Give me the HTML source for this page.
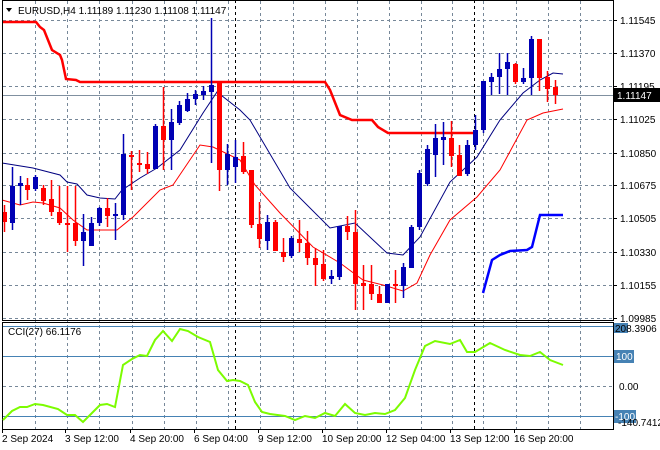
<!DOCTYPE html>
<html><head><meta charset="utf-8"><style>
body{margin:0;background:#fff;width:660px;height:450px;overflow:hidden;font-family:"Liberation Sans",sans-serif}
svg{display:block}
text{font-family:"Liberation Sans",sans-serif;font-size:10px;fill:#000}
</style></head><body>
<svg id="s" width="660" height="450" xmlns="http://www.w3.org/2000/svg">
<g id="grid" stroke="#778899" stroke-width="1" stroke-dasharray="3,3" fill="none"></g>
<line x1="2" y1="95.5" x2="613" y2="95.5" stroke="#8090a0"/>
<line x1="235.5" y1="0" x2="235.5" y2="429" stroke="#000" stroke-dasharray="3,3"/>
<line x1="474.5" y1="0" x2="474.5" y2="429" stroke="#000" stroke-dasharray="3,3"/>
<polyline fill="none" stroke="#ff0000" stroke-width="2.5" points="2,22 36,22 40,27 44,30 52,50 60,55 62,60 66,79 76,80 80,82 325,82 330,90 340,115 352,120 372,120 378,127 388,133 475,133"/>
<polyline fill="none" stroke="#0000ff" stroke-width="2.5" points="483,293 492,260 500,255 510,251 527,250 532,247 540,215 563,215"/>
<polyline fill="none" stroke="#000080" stroke-width="1" points="2,163 33,168 60,175 67,182 77,184 87,195 100,198 115,199 122,190 140,178 157,168 180,150 203,113 217,92 240,110 250,120 290,188 330,228 355,223 387,253 403,255 420,237 450,182 477,157 500,120 523,93 540,80 553,73 563,74"/>
<polyline fill="none" stroke="#ff0000" stroke-width="1" points="2,200 20,205 33,202 43,203 60,208 73,220 87,230 117,230 133,217 160,190 173,185 200,145 213,147 240,160 255,185 280,213 313,247 340,263 363,280 383,285 403,291 417,283 430,255 450,220 477,197 500,170 527,120 543,113 563,109"/>
<g id="candles"></g>
<rect x="2.5" y="0.5" width="611" height="320" fill="none" stroke="#000"/>
<rect x="2.5" y="322.5" width="611" height="107" fill="none" stroke="#000"/>
<line x1="3" y1="326.5" x2="613" y2="326.5" stroke="#4682b4"/>
<line x1="3" y1="356.5" x2="613" y2="356.5" stroke="#4682b4"/>
<line x1="3" y1="386.5" x2="613" y2="386.5" stroke="#778899" stroke-dasharray="3,3"/>
<line x1="3" y1="416.5" x2="613" y2="416.5" stroke="#4682b4"/>
<polyline fill="none" stroke="#7cfc00" stroke-width="2" points="3,420 12,411 20,407 27,407 35,404 43,405 58,409 67,415 75,415 83,422 100,405 107,404 115,407 123,365 132,359 140,355 147,356 155,340 163,331 172,341 180,329 188,331 198,337 210,342 218,370 227,381 233,380 240,381 248,385 255,402 262,412 270,414 285,416 295,420 305,416 315,418 325,413 335,416 345,404 355,413 365,415 375,413 385,414 395,410 405,398 415,370 425,346 435,341 450,344 460,340 467,352 475,352 490,343 505,350 520,355 530,356 540,352 550,360 563,365"/>
<text x="8" y="335">CCI(27) 66.1176</text>
<path d="M6,8 L12,8 L9,12 Z" fill="#000"/>
<text x="18" y="14">EURUSD,H4  1.11189 1.11230 1.11108 1.11147</text>
<g id="ax"></g>
<rect x="614" y="88" width="46" height="14" fill="#000"/>
<text x="617" y="99" style="fill:#fff">1.11147</text>
<rect x="614" y="323" width="14" height="10" fill="#4682b4"/>
<text x="615" y="332">208.3906</text>
<rect x="614" y="350" width="20" height="13" fill="#4682b4"/>
<text x="616" y="360" style="fill:#fff">100</text>
<text x="619" y="390">0.00</text>
<rect x="614" y="410" width="22" height="13" fill="#4682b4"/>
<text x="615" y="420" style="fill:#fff">-100</text>
<text x="618" y="426">-140.7412</text>
<g id="tl"></g>
</svg>
<script>
var NS="http://www.w3.org/2000/svg";
function el(p,t,a,txt){var e=document.createElementNS(NS,t);for(var k in a)e.setAttribute(k,a[k]);if(txt)e.textContent=txt;document.getElementById(p).appendChild(e);}
var g=[35,67,99,132,164,196,228,260,293,325,357,389,421,452,483,516,548,580];
g.forEach(function(x){el("grid","line",{x1:x+.5,y1:1,x2:x+.5,y2:429});});
var h=[20,53,86,119,153,185,218,252,285,318];
h.forEach(function(y){el("grid","line",{x1:3,y1:y+.5,x2:613,y2:y+.5});});
var lab=["1.11545","1.11370","1.11195","1.11025","1.10850","1.10675","1.10505","1.10330","1.10155","1.09985"];
h.forEach(function(y,i){el("ax","line",{x1:613,y1:y+.5,x2:617,y2:y+.5,stroke:"#000"});el("ax","text",{x:620,y:y+4},lab[i]);});
var tl=[[2,"2 Sep 2024"],[65,"3 Sep 12:00"],[130,"4 Sep 20:00"],[194,"6 Sep 04:00"],[258,"9 Sep 12:00"],[322,"10 Sep 20:00"],[386,"12 Sep 04:00"],[450,"13 Sep 12:00"],[514,"16 Sep 20:00"]];
tl.forEach(function(t){el("tl","text",{x:t[0],y:442},t[1]);el("tl","line",{x1:t[0]+.5,y1:429,x2:t[0]+.5,y2:433,stroke:"#000"});});
var c=[[4,212,222,205,232],[12,223,186,167,230],[20,185,184,176,205],[27,185,190,178,200],[35,189,177,175,191],[43,188,201,185,205],[51,199,212,180,216],[59,212,223,186,225],[67,223,225,186,252],[75,223,241,186,246],[83,241,232,214,266],[91,246,223,217,246],[99,223,208,207,226],[107,208,216,198,227],[115,216,214,203,240],[123,215,154,134,220],[131,155,157,151,190],[139,163,165,150,172],[147,164,169,152,174],[155,169,126,124,169],[163,126,140,87,170],[171,140,122,109,170],[179,123,105,101,125],[187,111,99,93,112],[195,99,94,90,105],[203,95,91,86,100],[211,92,85,18,163],[219,83,170,82,191],[227,170,154,144,185],[235,167,157,140,183],[243,156,172,142,174],[251,170,225,170,228],[259,224,239,202,248],[267,241,222,215,250],[275,222,251,220,251],[283,252,257,238,262],[291,256,238,236,258],[299,239,243,220,252],[307,243,258,231,265],[315,258,265,248,286],[323,264,279,250,281],[331,279,276,270,284],[339,277,226,226,280],[347,226,232,216,240],[355,232,284,210,310],[363,284,285,265,310],[371,284,294,265,300],[379,294,303,286,303],[387,303,284,284,303],[395,284,286,270,303],[403,286,267,263,298],[411,268,227,225,268],[419,227,173,170,230],[427,184,149,145,186],[435,155,138,124,177],[443,139,138,122,165],[451,138,156,121,167],[459,155,176,145,176],[467,174,145,140,176],[475,145,130,115,150],[483,130,81,81,133],[491,82,77,73,95],[499,77,69,53,94],[507,69,62,53,95],[515,64,82,63,84],[523,82,78,68,84],[531,78,39,36,95],[539,39,78,39,91],[547,77,89,71,102],[555,87,95,80,104]];
c.forEach(function(d){var x=d[0],o=d[1],cl=d[2],bull=cl<o,col=bull?"#0000b4":"#ff0000";
el("candles","line",{x1:x+.5,y1:d[3],x2:x+.5,y2:d[4],stroke:col,"stroke-width":1.5});
var t=Math.min(o,cl),b=Math.max(o,cl);if(b-t<1.5){t-=1;b+=1;}
el("candles","rect",{x:x-2,y:t,width:5,height:b-t,fill:col});});
</script>
</body></html>
